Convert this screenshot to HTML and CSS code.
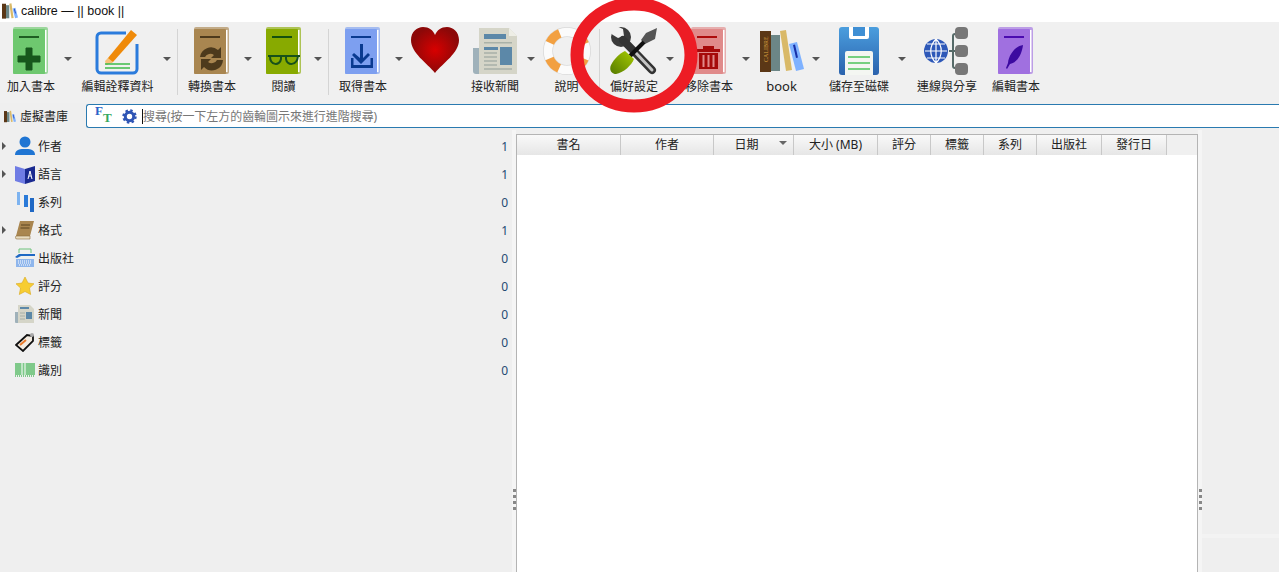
FILE: index.html
```html
<!DOCTYPE html>
<html lang="zh-Hant">
<head>
  <meta charset="UTF-8">
  <title>calibre — || book ||</title>
  <link rel="stylesheet" href="styles.css">
</head>
<body>

<svg class="defs" width="0" height="0">
  <defs>
    <symbol id="book" viewBox="0 0 36 48">
      <rect x="0" y="0" width="35" height="47" rx="2" fill="currentColor" opacity="0.65"/>
      <rect x="0" y="2" width="32" height="45" rx="1" fill="currentColor"/>
      <rect x="32" y="3" width="1.5" height="42" fill="#fff"/>
    </symbol>
    <symbol id="shelf" viewBox="0 0 44 44">
      <rect x="0" y="2" width="11" height="41" fill="#5b3716"/>
      <rect x="11" y="6" width="9" height="36" fill="#6c8686"/>
      <path d="M20 2l6-1 6 40-6 1z" fill="#d9b968"/>
      <path d="M29 15l8-2 7 27-8 2z" fill="#7fb2ff"/>
      <path d="M33 16l2-.5 3 13-2 .5z" fill="#1730a8"/>
    </symbol>
    <radialGradient id="heartFill">
      <stop offset="0" stop-color="#d80000"/>
      <stop offset="1" stop-color="#8c0808"/>
    </radialGradient>
    <linearGradient id="floppyFill" x1="0" y1="0" x2="0" y2="1">
      <stop offset="0" stop-color="#4b9ede"/>
      <stop offset="1" stop-color="#2a62ad"/>
    </linearGradient>
    <linearGradient id="handleFill" x1="1" y1="0" x2="0" y2="1">
      <stop offset="0" stop-color="#a8cc00"/>
      <stop offset="1" stop-color="#557a00"/>
    </linearGradient>
  </defs>
</svg>

<div class="titlebar">
  <svg class="title-icon" width="16" height="16"><use href="#shelf"/></svg>
  <span>calibre — || book ||</span>
</div>

<div class="toolbar">
  <div class="tool t-add">
    <div class="tool-main">
      <svg width="36" height="48" viewBox="0 0 36 48"><use href="#book" width="36" height="48" class="c-green"/>
        <rect x="6" y="9" width="20" height="2" fill="#1f5e22"/>
        <path d="M13 21h6v8h8v6h-8v8h-6v-8H5v-6h8z" fill="#17571c" stroke="#17571c" stroke-linejoin="round"/>
      </svg>
      <span>加入書本</span>
    </div>
    <i class="drop"></i>
  </div>
  <div class="tool t-meta">
    <div class="tool-main">
      <svg width="48" height="48" viewBox="0 0 48 48">
        <path d="M32 6H7a4 4 0 0 0-4 4v32a4 4 0 0 0 4 4h32a4 4 0 0 0 4-4V17" fill="none" stroke="#2a7bdc" stroke-width="3"/>
        <path d="M14 31L37 3l6 5-24 27-7 3z" fill="#ef8a0a"/>
        <path d="M11 34l3-3 5 4-7 3z" fill="#f6c27a"/>
        <path d="M11 36h25M11 40h25" stroke="#3dba4a" stroke-width="1.6" transform="translate(0 1)"/>
      </svg>
      <span>編輯詮釋資料</span>
    </div>
    <i class="drop"></i>
  </div>
  <b class="sep s1"></b>
  <div class="tool t-conv">
    <div class="tool-main">
      <svg width="36" height="48" viewBox="0 0 36 48"><use href="#book" width="36" height="48" class="c-brown"/>
        <rect x="6" y="9" width="20" height="2" fill="#4d3a1c"/>
        <path d="M6 30a11 11 0 0 1 18-7l3-3v11h-10l3-3a6 6 0 0 0-9 2zM29 33a11 11 0 0 1-19 7l-3 3V32h10l-3 3a6 6 0 0 0 9-2z" fill="#4d3a1c"/>
      </svg>
      <span>轉換書本</span>
    </div>
    <i class="drop"></i>
  </div>
  <div class="tool t-read">
    <div class="tool-main">
      <svg width="36" height="48" viewBox="0 0 36 48"><use href="#book" width="36" height="48" class="c-olive"/>
        <rect x="6" y="9" width="20" height="2" fill="#14500f"/>
        <path d="M2 29h32M4 29c0 10 10 10 11 3v-3M20 29v3c1 7 11 7 12-3" fill="none" stroke="#17511a" stroke-width="2"/>
      </svg>
      <span>閱讀</span>
    </div>
    <i class="drop"></i>
  </div>
  <b class="sep s2"></b>
  <div class="tool t-get">
    <div class="tool-main">
      <svg width="36" height="48" viewBox="0 0 36 48"><use href="#book" width="36" height="48" class="c-blue"/>
        <rect x="6" y="9" width="20" height="2" fill="#0a3a90"/>
        <path d="M15 17h3v14l5-5 2 2-9 9-9-9 2-2 6 5zM6 31h2.500v7h17v-7H28v10H6z" fill="#0a3a90"/>
      </svg>
      <span>取得書本</span>
    </div>
    <i class="drop"></i>
  </div>
  <div class="tool t-heart">
    <div class="tool-main">
      <svg width="48" height="48" viewBox="0 0 48 48">
        <path d="M24 46C16 36 0 26 0 13 0 5 6 0 12 0c6 0 10 3 12 8 2-5 6-8 12-8 6 0 12 5 12 13 0 13-16 23-24 33z" fill="url(#heartFill)"/>
      </svg>
      <span></span>
    </div>
  </div>
  <div class="tool t-news">
    <div class="tool-main">
      <svg width="44" height="48" viewBox="0 0 44 48">
        <path d="M0 21h7v26H3a3 3 0 0 1-3-3z" fill="#9fb1ba"/>
        <path d="M6 1h30l8 8v38H6z" fill="#d5d5c8"/>
        <path d="M36 1l8 8h-8z" fill="#eeeee6"/>
        <rect x="11" y="7" width="22" height="5" fill="#5c88a8"/>
        <rect x="11" y="15" width="28" height="1.500" fill="#aab2a8"/>
        <rect x="11" y="20" width="14" height="3" fill="#5c88a8"/>
        <path d="M11 26h13M11 30h13M11 34h13M11 38h13M11 42h28" stroke="#a8b0a8" stroke-width="1.500"/>
        <rect x="27" y="20" width="12" height="18" fill="#5c88a8"/>
      </svg>
      <span>接收新聞</span>
    </div>
    <i class="drop"></i>
  </div>
  <div class="tool t-help">
    <div class="tool-main">
      <svg width="48" height="48" viewBox="0 0 48 48">
        <circle cx="24" cy="24" r="19" fill="none" stroke="#d8d8d8" stroke-width="10"/>
        <circle cx="24" cy="24" r="19" fill="none" stroke="#fbfbfb" stroke-width="8.500"/>
        <circle cx="24" cy="24" r="19" fill="none" stroke="#f2a041" stroke-width="9" stroke-dasharray="14 15.845" stroke-dashoffset="-7.900"/>
      </svg>
      <span>說明</span>
    </div>
  </div>
  <b class="sep s3"></b>
  <div class="tool t-pref">
    <div class="tool-main">
      <svg width="48" height="48" viewBox="0 0 48 48">
        <circle cx="11" cy="10" r="10" fill="#3a3a3a"/>
        <path d="M-1 5L6-1l7 3 1 7-6 2-5-3z" fill="#f0f0f0"/>
        <path d="M13 13l29 30" stroke="#333" stroke-width="8" stroke-linecap="round"/>
        <path d="M25 25l17 18" stroke="#c4c4c4" stroke-width="3" stroke-linecap="round"/>
        <path d="M47 1l-2 11-10 5-4-4 5-7z" fill="#555"/>
        <path d="M34 15L20 29" stroke="#111" stroke-width="4"/>
        <path d="M15 24l9 8c-2 6-11 14-18 15-5 0-7-5-5-9 3-6 9-12 14-14z" fill="url(#handleFill)"/>
      </svg>
      <span>偏好設定</span>
    </div>
    <i class="drop"></i>
  </div>
  <div class="tool t-del">
    <div class="tool-main">
      <svg width="36" height="48" viewBox="0 0 36 48"><use href="#book" width="36" height="48" class="c-pink"/>
        <rect x="6" y="9" width="20" height="2" fill="#ad0b0b"/>
        <path d="M6 22h23v3H6zM12 19h11v3H12z" fill="#a60a0a"/>
        <path d="M8 26h19v16H8zM11.500 28v12h2V28zm5 0v12h2V28zm5 0v12h2V28z" fill="#a60a0a" fill-rule="evenodd"/>
      </svg>
      <span>移除書本</span>
    </div>
    <i class="drop"></i>
  </div>
  <div class="tool t-lib">
    <div class="tool-main">
      <svg width="44" height="44" viewBox="0 0 44 44" class="shelf-big"><use href="#shelf"/>
        <text class="spine" transform="translate(8 33) rotate(-90)">CALIBRE</text>
      </svg>
      <span class="latin">book</span>
    </div>
    <i class="drop"></i>
  </div>
  <div class="tool t-save">
    <div class="tool-main">
      <svg width="40" height="48" viewBox="0 0 40 48">
        <path d="M3 0h34a3 3 0 0 1 3 3v42a3 3 0 0 1-3 3H3a3 3 0 0 1-3-3V3a3 3 0 0 1 3-3z" fill="url(#floppyFill)"/>
        <path d="M10 0h20v10a2 2 0 0 1-2 2H12a2 2 0 0 1-2-2z" fill="#fff"/>
        <rect x="14" y="0" width="12" height="9" fill="#3f8fd4"/>
        <path d="M8 24h24a2 2 0 0 1 2 2v22H6V26a2 2 0 0 1 2-2z" fill="#f4f6f2"/>
        <path d="M9 30h22M9 36h22M9 42h22" stroke="#4cc35b" stroke-width="1.300"/>
      </svg>
      <span>儲存至磁碟</span>
    </div>
    <i class="drop"></i>
  </div>
  <div class="tool t-conn">
    <div class="tool-main">
      <svg width="48" height="48" viewBox="0 0 48 48">
        <path d="M26 24h8M34 7h-2a2 2 0 0 0-2 2v30a2 2 0 0 0 2 2h2" fill="none" stroke="#556a68" stroke-width="2"/>
        <rect x="32" y="0" width="13" height="12" rx="4" fill="#777"/>
        <rect x="32" y="18" width="13" height="12" rx="4" fill="#777"/>
        <rect x="32" y="36" width="13" height="12" rx="4" fill="#777"/>
        <circle cx="13" cy="24" r="12" fill="#2d58b8"/>
        <path d="M2 24h22M13 12v24M4 17h18M4 31h18M13 12c-7 7-7 17 0 24M13 12c7 7 7 17 0 24" fill="none" stroke="#fff" stroke-width="1.200"/>
      </svg>
      <span>連線與分享</span>
    </div>
  </div>
  <div class="tool t-edit">
    <div class="tool-main">
      <svg width="36" height="48" viewBox="0 0 36 48"><use href="#book" width="36" height="48" class="c-purple"/>
        <rect x="6" y="9" width="20" height="2" fill="#4b0bb0"/>
        <path d="M25 18c-7 1-14 9-15 18l-2 5 1 1 3-5c7-1 12-10 13-19z" fill="#3c0aa0"/>
      </svg>
      <span>編輯書本</span>
    </div>
  </div>
</div>

<div class="searchbar">
  <div class="vlib">
    <svg width="12" height="15"><use href="#shelf"/></svg>
    <span>虛擬書庫</span>
  </div>
  <div class="search-box">
    <span class="ft"><span class="ft-f">F</span><span class="ft-t">T</span></span>
    <svg class="gear" width="15" height="15" viewBox="0 0 15 15">
      <circle cx="7.500" cy="7.500" r="4.200" fill="none" stroke="#2f55b5" stroke-width="3"/>
      <circle cx="7.500" cy="7.500" r="6" fill="none" stroke="#2f55b5" stroke-width="2.400" stroke-dasharray="2.400 2.312"/>
    </svg>
    <span class="caret"></span>
    <span class="placeholder">搜尋(按一下左方的齒輪圖示來進行進階搜尋)</span>
  </div>
</div>

<div class="main">
  <div class="sidebar">
    <div class="row has-kids">
      <svg width="20" height="20" viewBox="0 0 20 20"><circle cx="10" cy="6" r="5.500" fill="#1f75d3"/><path d="M0 19c0-6 6-6 10-6s10 0 10 6z" fill="#1f75d3"/></svg>
      <span class="name">作者</span><span class="count">1</span>
    </div>
    <div class="row has-kids">
      <svg width="20" height="20" viewBox="0 0 20 20"><path d="M0 2l10 3v15L0 17z" fill="#6f7ce4"/><path d="M10 5l10-3v15l-10 3z" fill="#1a2a90"/><path d="M13 15l2-8 2 8M14 12h2" stroke="#fff" fill="none"/></svg>
      <span class="name">語言</span><span class="count">1</span>
    </div>
    <div class="row">
      <svg width="20" height="20" viewBox="0 0 20 20"><rect x="2" y="0" width="3" height="13" fill="#7db3f0"/><rect x="9" y="3" width="4" height="12" fill="#2a7ad8"/><rect x="15" y="6" width="4" height="14" fill="#1f68c4"/></svg>
      <span class="name">系列</span><span class="count">0</span>
    </div>
    <div class="row has-kids">
      <svg width="20" height="20" viewBox="0 0 20 20"><path d="M5 1h14l-4 15H1z" fill="#a98650"/><path d="M1 16h14v3H2c-2 0-2-2-1-3z" fill="#e8dcc0" stroke="#8a6c3c" stroke-width=".6"/><path d="M6 5h9M5.500 8h9" stroke="#5a4420"/></svg>
      <span class="name">格式</span><span class="count">1</span>
    </div>
    <div class="row">
      <svg width="20" height="20" viewBox="0 0 20 20"><path d="M4 5V1h12v4" fill="none" stroke="#6cc27a"/><path d="M0 9l4-3h16v2H6L2 10z" fill="#1f68c4"/><path d="M1 11h18v8H1z" fill="#8fb6ec"/><path d="M3 13h14M3 15h14M4 17h12" stroke="#fff" stroke-dasharray="1 1"/></svg>
      <span class="name">出版社</span><span class="count">0</span>
    </div>
    <div class="row">
      <svg width="20" height="20" viewBox="0 0 20 20"><path d="M10 1l3 6 6 .8-4.500 4.200 1.200 6.500L10 15.500l-5.700 3L5.500 12 1 7.800 7 7z" fill="#f7cd32" stroke="#d8a81c" stroke-width=".6"/></svg>
      <span class="name">評分</span><span class="count">0</span>
    </div>
    <div class="row">
      <svg width="20" height="20" viewBox="0 0 20 20"><path d="M0 8h3v11H1a1 1 0 0 1-1-1z" fill="#9fb1ba"/><path d="M3 1h12l4 4v14H3z" fill="#d5d5c8"/><rect x="5" y="3" width="9" height="2" fill="#5c88a8"/><rect x="11" y="8" width="6" height="7" fill="#5c88a8"/><path d="M5 9h5M5 12h5M5 15h5" stroke="#a8b0a8"/></svg>
      <span class="name">新聞</span><span class="count">0</span>
    </div>
    <div class="row">
      <svg width="20" height="20" viewBox="0 0 20 20"><path d="M1 13L12 3l6 1 0 5-10 10z" fill="#f3ece2" stroke="#111" stroke-width="1.800"/><path d="M5 13l6-5" stroke="#ea7a2a" stroke-width="2"/><circle cx="17" cy="3" r="2" fill="#aaa"/></svg>
      <span class="name">標籤</span><span class="count">0</span>
    </div>
    <div class="row">
      <svg width="20" height="20" viewBox="0 0 20 20"><rect x="0" y="3" width="20" height="12" fill="#7fc98a"/><path d="M7 3v12M10 3v12" stroke="#fff"/><path d="M0 16h20" stroke="#7fc98a" stroke-dasharray="1 1" stroke-width="2"/></svg>
      <span class="name">識別</span><span class="count">0</span>
    </div>
  </div>

  <div class="splitter"><i></i><i></i><i></i><i></i></div>

  <div class="books">
    <div class="head">
      <div class="col">書名</div>
      <div class="col">作者</div>
      <div class="col sorted">日期</div>
      <div class="col">大小 (MB)</div>
      <div class="col">評分</div>
      <div class="col">標籤</div>
      <div class="col">系列</div>
      <div class="col">出版社</div>
      <div class="col">發行日</div>
      <div class="col-rest"></div>
    </div>
    <div class="body"></div>
  </div>

  <div class="splitter"><i></i><i></i><i></i><i></i></div>

  <div class="details">
    <div class="details-top"></div>
    <div class="details-line"></div>
  </div>
</div>

<svg class="mark" width="140" height="120" viewBox="0 0 140 120">
  <ellipse cx="70" cy="60" rx="57" ry="51" fill="none" stroke="#ed1c24" stroke-width="13"/>
</svg>

</body>
</html>
```

FILE: styles.css
```css
html, body {
  margin: 0;
  height: 100%;
  overflow: hidden;
}
body {
  position: relative;
  display: flex;
  flex-direction: column;
  background: #efefef;
  color: #222;
  font-family: "Noto Sans", "Noto Sans CJK TC", sans-serif;
  font-size: 12px;
}
.defs {
  position: absolute;
}

/* title bar */
.titlebar {
  height: 22px;
  background: #fff;
  display: flex;
  align-items: center;
  padding-left: 2px;
  font-family: "Liberation Sans", sans-serif;
  font-size: 12.5px;
  color: #111;
}
.title-icon {
  margin-right: 3px;
}

/* toolbar */
.toolbar {
  height: 81px;
  background: #f0f0f0;
  display: flex;
  align-items: flex-start;
  padding-top: 5px;
  box-sizing: border-box;
}
.tool {
  display: flex;
  flex-shrink: 0;
}
.tool-main {
  display: flex;
  flex-direction: column;
  align-items: center;
  line-height: 16px;
  white-space: nowrap;
}
.tool-main svg {
  display: block;
  height: 48px;
  margin-bottom: 4px;
}
.tool-main span {
  min-height: 16px;
}
.tool-main .latin {
  font-size: 13px;
  margin-top: -1px;
}
.shelf-big {
  overflow: visible;
}
.spine {
  font-family: "Liberation Serif", serif;
  font-size: 6px;
  fill: #d8a040;
}
.drop {
  display: block;
  width: 18px;
  height: 48px;
  position: relative;
}
.drop::after {
  content: "";
  position: absolute;
  left: 5px;
  top: 30px;
  border-left: 4px solid transparent;
  border-right: 4px solid transparent;
  border-top: 4px solid #555;
}
.sep {
  display: block;
  width: 1px;
  height: 66px;
  background: #d4d4d4;
  flex-shrink: 0;
  margin-top: 2px;
}

.c-green { color: #6ec86f; }
.c-brown { color: #a98650; }
.c-olive { color: #88aa00; }
.c-blue { color: #7d9ff0; }
.c-pink { color: #e08a8a; }
.c-purple { color: #a070e0; }

.t-add .tool-main { width: 56px; margin-left: 3px; }
.t-meta .tool-main { width: 81px; }
.s1 { margin-left: 1px; margin-right: 7px; }
.t-conv .tool-main { width: 54px; }
.t-read .tool-main { width: 51px; margin-left: 1px; }
.s2 { margin-left: 1px; margin-right: 7px; }
.t-get .tool-main { width: 54px; }
.t-heart .tool-main { width: 54px; }
.t-news .tool-main { width: 54px; margin-left: 6px; }
.t-help .tool-main { width: 51px; margin-left: 1px; }
.s3 { margin-left: 7px; margin-right: 7px; }
.t-pref .tool-main { width: 54px; }
.t-del .tool-main { width: 54px; margin-left: 3px; }
.t-del .drop { margin-left: 1px; margin-right: 1px; }
.t-lib .tool-main { width: 51px; }
.t-save .tool-main { width: 68px; }
.t-conn .tool-main { width: 72px; }
.t-edit .tool-main { width: 54px; margin-left: 6px; }

/* search row */
.searchbar {
  height: 27px;
  display: flex;
  align-items: flex-start;
  padding-top: 1px;
  box-sizing: border-box;
}
.vlib {
  width: 86px;
  height: 24px;
  flex-shrink: 0;
  display: flex;
  align-items: center;
  gap: 4px;
  padding-left: 4px;
  box-sizing: border-box;
}
.search-box {
  flex: 1;
  height: 24px;
  background: #fff;
  border: 1px solid #2a7ab0;
  border-right: none;
  border-radius: 3px 0 0 3px;
  box-sizing: border-box;
  display: flex;
  align-items: center;
  padding-left: 8px;
}
.ft {
  width: 18px;
  font-family: "Liberation Serif", serif;
  font-size: 13px;
  font-weight: bold;
  display: flex;
}
.ft-f {
  color: #2a63c8;
  margin-top: -4px;
}
.ft-t {
  color: #35a860;
  margin-top: 3px;
}
.gear {
  margin-left: 9px;
  margin-right: 5px;
}
.caret {
  width: 1px;
  height: 15px;
  background: #111;
}
.placeholder {
  color: #777;
  letter-spacing: -0.05px;
}

/* main area */
.main {
  flex: 1;
  display: flex;
  min-height: 0;
}
.sidebar {
  width: 512px;
  flex-shrink: 0;
  padding-top: 2px;
  box-sizing: border-box;
}
.row {
  height: 28px;
  display: flex;
  align-items: center;
  padding-left: 15px;
  padding-right: 4px;
  position: relative;
}
.row svg {
  flex-shrink: 0;
}
.row .name {
  margin-left: 3px;
}
.row .count {
  margin-left: auto;
  color: #234a72;
}
.has-kids::before {
  content: "";
  position: absolute;
  left: 2px;
  top: 10px;
  border-top: 4px solid transparent;
  border-bottom: 4px solid transparent;
  border-left: 4px solid #555;
}

.splitter {
  width: 4px;
  flex-shrink: 0;
  background: #f5f5f5;
  padding-top: 359px;
  box-sizing: border-box;
  display: flex;
  flex-direction: column;
  align-items: center;
  gap: 3px;
}
.splitter i {
  display: block;
  width: 3px;
  height: 3px;
  background: #888;
}

.books {
  width: 682px;
  flex-shrink: 0;
  margin-top: 4px;
  display: flex;
  flex-direction: column;
  border-left: 1px solid #b4b4b4;
  border-right: 1px solid #b4b4b4;
  box-sizing: border-box;
  background: #fff;
}
.head {
  height: 19px;
  flex-shrink: 0;
  display: grid;
  grid-template-columns: 104px 93px 80px 84px 53px 53px 53px 65px 65px 1fr;
  border-top: 1px solid #b4b4b4;
  border-bottom: 1px solid #b4b4b4;
}
.col {
  background: linear-gradient(#f9f9f9, #e6e6e6);
  border-right: 1px solid #c8c8c8;
  box-sizing: border-box;
  text-align: center;
  line-height: 20px;
  position: relative;
}
.col-rest {
  background: #f0f0f0;
}
.sorted {
  padding-right: 14px;
}
.sorted::after {
  content: "";
  position: absolute;
  right: 6px;
  top: 6px;
  border-left: 4px solid transparent;
  border-right: 4px solid transparent;
  border-top: 4px solid #666;
}
.body {
  flex: 1;
}

.details {
  flex: 1;
}
.details-top {
  height: 404px;
}
.details-line {
  height: 4px;
  background: #f3f3f3;
}

/* red circle drawn over the screenshot */
.mark {
  position: absolute;
  left: 564px;
  top: -5px;
}
```
